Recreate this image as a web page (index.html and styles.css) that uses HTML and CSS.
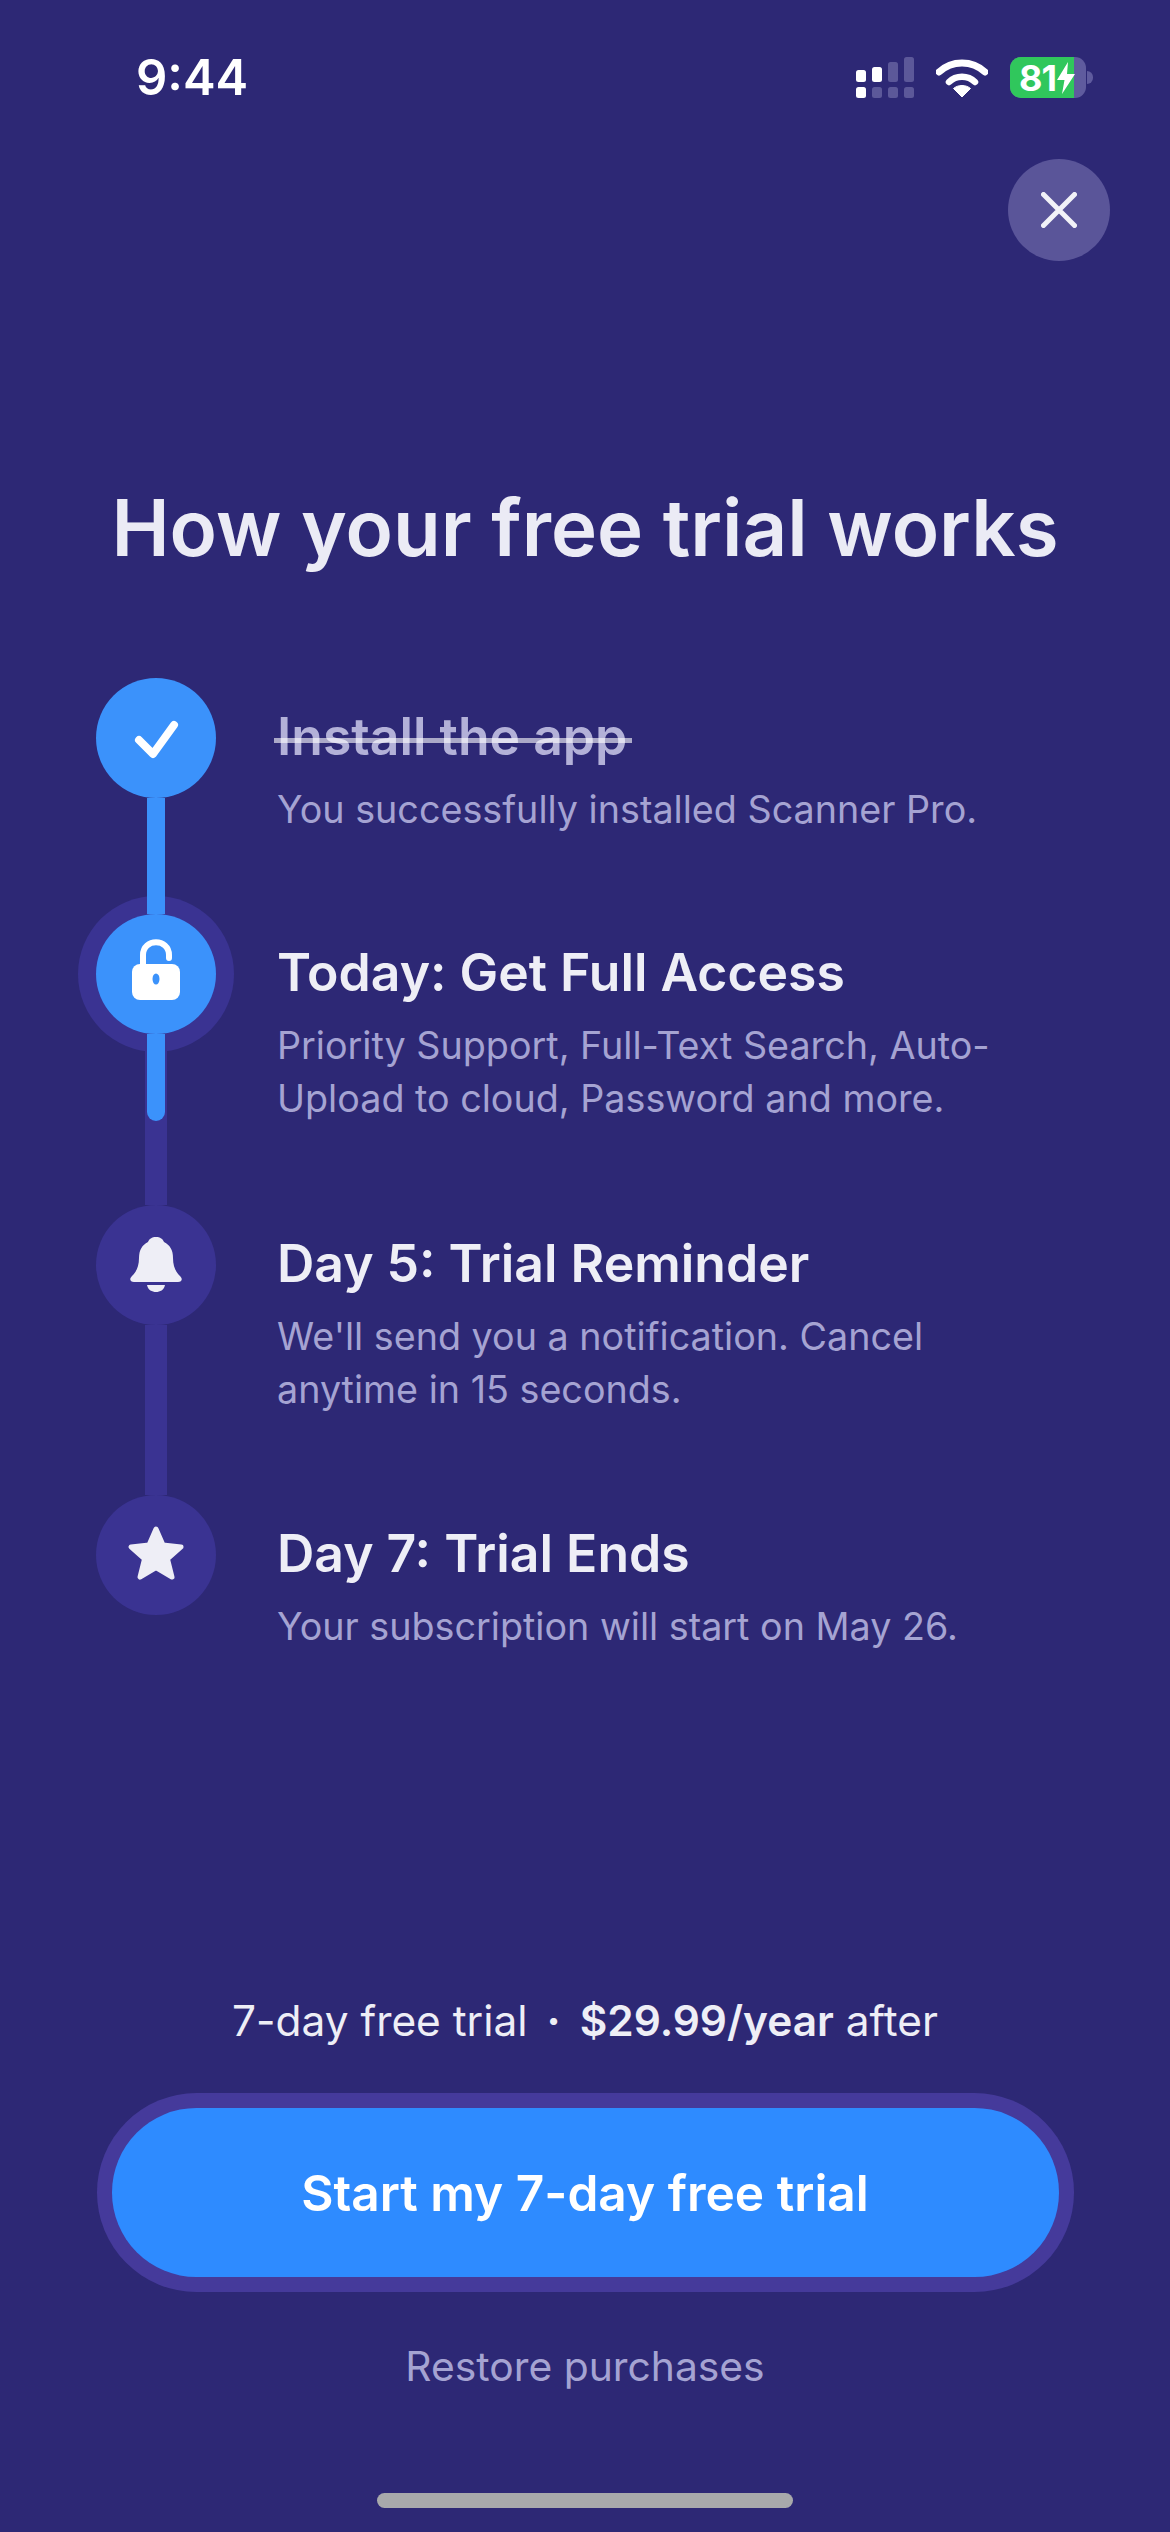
FILE: index.html
```html
<!DOCTYPE html>
<html lang="en">
<head>
  <meta charset="UTF-8">
  <meta name="viewport" content="width=device-width, initial-scale=1.0">
  <title>How your free trial works</title>
  <link rel="stylesheet" href="styles.css">
</head>
<body>
  <main class="paywall">
    <header class="status-bar">
      <span class="status-time">9:44</span>
      <div class="status-icons">
        <svg class="status-signal" viewBox="0 0 58 41" width="58" height="41">
          <rect x="0" y="13" width="10" height="12" rx="2.5" fill="#fff"/>
          <rect x="16" y="10" width="10" height="15" rx="2.5" fill="#fff"/>
          <rect x="32" y="5" width="10" height="20" rx="2.5" fill="#5c5899"/>
          <rect x="48" y="0" width="10" height="25" rx="2.5" fill="#5c5899"/>
          <rect x="0" y="30" width="10" height="11" rx="2.5" fill="#fff"/>
          <rect x="16" y="30" width="10" height="11" rx="2.5" fill="#5c5899"/>
          <rect x="32" y="30" width="10" height="11" rx="2.5" fill="#5c5899"/>
          <rect x="48" y="30" width="10" height="11" rx="2.5" fill="#5c5899"/>
        </svg>
        <svg class="status-wifi" viewBox="0 0 52 38" width="52" height="38">
          <path d="M3 13 C16 1 36 1 49 13" fill="none" stroke="#fff" stroke-width="7" stroke-linecap="round"/>
          <path d="M13 23 C20 16 32 16 39 23" fill="none" stroke="#fff" stroke-width="6.5" stroke-linecap="round"/>
          <path d="M26 38 L17.5 29.5 C22 25.5 30 25.5 34.5 29.5 Z" fill="#fff" stroke="#fff" stroke-linejoin="round"/>
        </svg>
        <div class="battery">
          <div class="battery-body">
            <div class="battery-fill"></div>
            <span class="battery-level">81</span>
            <svg class="battery-bolt" viewBox="0 0 20 32" width="20" height="32">
              <path d="M12 0 L1 18 H8.5 L6 32 L19 12 H11 Z" fill="#fff"/>
            </svg>
          </div>
          <div class="battery-nub"></div>
        </div>
      </div>
    </header>

    <button class="close-btn" aria-label="Close">
      <svg viewBox="0 0 36 36" width="36" height="36">
        <path d="M2.5 2.5 L33.5 33.5 M33.5 2.5 L2.5 33.5" fill="none" stroke="#f2f2f8" stroke-width="5" stroke-linecap="round"/>
      </svg>
    </button>

    <h1 class="title">How your free trial works</h1>

    <ol class="timeline">
      <li class="step step-install">
        <div class="step-rail">
          <div class="step-icon is-active">
            <svg viewBox="0 0 120 120" width="120" height="120">
              <path d="M43 62 L57 76 L78 47" fill="none" stroke="#fff" stroke-width="8" stroke-linecap="round" stroke-linejoin="round"/>
            </svg>
          </div>
          <div class="step-line is-active"></div>
        </div>
        <div class="step-text">
          <h2 class="step-title is-done"><span class="step-strike">Install the app</span></h2>
          <p class="step-desc">You successfully installed Scanner Pro.</p>
        </div>
      </li>
      <li class="step step-today">
        <div class="step-rail">
          <div class="step-icon is-active has-ring">
            <svg viewBox="0 0 120 120" width="120" height="120">
              <path d="M47 52 V41 C47 24 73 24 73 41 V44" fill="none" stroke="#fff" stroke-width="6" stroke-linecap="round"/>
              <rect x="36" y="50" width="48" height="36" rx="8" fill="#fff"/>
              <ellipse cx="60" cy="65" rx="3.5" ry="5.5" fill="#3b92fb"/>
            </svg>
          </div>
          <div class="step-line">
            <div class="step-line-fill"></div>
          </div>
        </div>
        <div class="step-text">
          <h2 class="step-title">Today: Get Full Access</h2>
          <p class="step-desc">Priority Support, Full-Text Search, Auto-<br>Upload to cloud, Password and more.</p>
        </div>
      </li>
      <li class="step step-reminder">
        <div class="step-rail">
          <div class="step-icon">
            <svg viewBox="0 0 120 120" width="120" height="120">
              <path d="M60 32 C64 32 67 34 68 37 C74 40 77 45 77 53 C77 62 80 67 84 71 C87 74 86 77 82 77 H38 C34 77 33 74 36 71 C40 67 43 62 43 53 C43 45 46 40 52 37 C53 34 56 32 60 32 Z" fill="#eeeef6"/>
              <path d="M51 80 H69 C68 85 64 87 60 87 C56 87 52 85 51 80 Z" fill="#eeeef6"/>
            </svg>
          </div>
          <div class="step-line"></div>
        </div>
        <div class="step-text">
          <h2 class="step-title">Day 5: Trial Reminder</h2>
          <p class="step-desc">We'll send you a notification. Cancel<br>anytime in 15 seconds.</p>
        </div>
      </li>
      <li class="step step-end">
        <div class="step-rail">
          <div class="step-icon">
            <svg viewBox="0 0 120 120" width="120" height="120">
              <path d="M60 34 L67 50 L85 52 L71.5 64 L76 82 L60 72.5 L44 82 L48.5 64 L35 52 L53 50 Z" fill="#eeeef6" stroke="#eeeef6" stroke-width="5" stroke-linejoin="round"/>
            </svg>
          </div>
        </div>
        <div class="step-text">
          <h2 class="step-title">Day 7: Trial Ends</h2>
          <p class="step-desc">Your subscription will start on May 26.</p>
        </div>
      </li>
    </ol>

    <footer class="offer">
      <p class="offer-price">7-day free trial<span class="offer-dot">·</span><strong>$29.99/year</strong> after</p>
      <div class="offer-ring">
        <button class="offer-btn">Start my 7-day free trial</button>
      </div>
      <a class="offer-restore">Restore purchases</a>
      <div class="home-indicator"></div>
    </footer>
  </main>
</body>
</html>
```

FILE: styles.css
```css
:root {
  --bg-color: #2d2875;
  --blue-color: #3b92fb;
  --btn-color: #2e8bff;
  --dim-color: #3a3392;
  --ring-color: #453a9b;
  --text-color: #eeeef6;
  --muted-color: #a5a3d2;
}

html {
  box-sizing: border-box;
  font-family: Inter, "Liberation Sans", sans-serif;
}

*,
*::before,
*::after {
  box-sizing: inherit;
}

body {
  margin: 0;
  background-color: var(--bg-color);
  color: var(--text-color);
}

.paywall {
  display: flex;
  flex-direction: column;
  width: 1170px;
  height: 2532px;
  overflow: hidden;
}

/* status bar */
.status-bar {
  display: flex;
  justify-content: space-between;
  align-items: center;
  height: 41px;
  margin-top: 57px;
  padding: 0 77px 0 136px;
}

.status-time {
  font-size: 49px;
  font-weight: 600;
  color: #fff;
}

.status-icons {
  display: flex;
  align-items: center;
  gap: 22px;
}

.status-signal,
.status-wifi {
  display: block;
}

.battery {
  display: flex;
  align-items: center;
  gap: 1px;
}

.battery-body {
  position: relative;
  display: flex;
  align-items: center;
  justify-content: flex-start;
  width: 76px;
  height: 41px;
  padding-left: 9px;
  border-radius: 11px;
  background-color: #5f5b9e;
  overflow: hidden;
}

.battery-fill {
  position: absolute;
  left: 0;
  top: 0;
  bottom: 0;
  width: 64px;
  background-color: #30c75c;
}

.battery-level {
  position: relative;
  font-size: 36px;
  font-weight: 700;
  letter-spacing: -1px;
  color: #fff;
}

.battery-bolt {
  position: relative;
}

.battery-nub {
  width: 6px;
  height: 13px;
  border-radius: 0 6px 6px 0;
  background-color: #5f5b9e;
}

/* close */
.close-btn {
  display: flex;
  align-items: center;
  justify-content: center;
  align-self: flex-end;
  width: 102px;
  height: 102px;
  margin: 61px 60px 0 0;
  padding: 0;
  border: none;
  border-radius: 50%;
  background-color: #5a5599;
}

.title {
  margin: 217px 0 0;
  font-size: 78px;
  font-weight: 600;
  line-height: 100px;
  text-align: center;
  color: #ebebf5;
}

/* timeline */
.timeline {
  isolation: isolate;
  margin: 100px 0 0;
  padding: 0 0 0 96px;
  list-style: none;
}

.step {
  display: flex;
  gap: 61px;
}

.step-install {
  height: 236px;
}

.step-today {
  height: 291px;
}

.step-reminder {
  height: 290px;
}

.step-end {
  height: 120px;
}

.step-rail {
  display: flex;
  flex-direction: column;
  align-items: center;
  flex: none;
  width: 120px;
}

.step-icon {
  position: relative;
  flex: none;
  width: 120px;
  height: 120px;
  border-radius: 50%;
  background-color: var(--dim-color);
}

.step-icon svg {
  display: block;
}

.step-icon.is-active {
  background-color: var(--blue-color);
}

.step-icon.has-ring::before {
  content: "";
  position: absolute;
  top: -18px;
  left: -18px;
  right: -18px;
  bottom: -18px;
  z-index: -1;
  border-radius: 50%;
  background-color: var(--dim-color);
}

.step-line {
  flex: 1;
  width: 22px;
  background-color: var(--dim-color);
}

.step-line.is-active {
  width: 18px;
  background-color: var(--blue-color);
}

.step-line-fill {
  width: 18px;
  height: 87px;
  margin: 0 auto;
  border-radius: 0 0 9px 9px;
  background-color: var(--blue-color);
}

.step-text {
  padding-top: 28px;
}

.step-title {
  margin: 0;
  font-size: 51.7px;
  font-weight: 600;
  line-height: 60px;
}

.step-title.is-done {
  color: #b3b1d8;
}

.step-strike {
  position: relative;
  display: inline-block;
}

.step-strike::after {
  content: "";
  position: absolute;
  left: -3px;
  right: -5px;
  top: 32px;
  height: 5px;
  background-color: rgba(255, 255, 255, 0.6);
}

.step-desc {
  margin: 17px 0 0;
  font-size: 37.7px;
  line-height: 53px;
  color: var(--muted-color);
}

/* bottom offer */
.offer {
  display: flex;
  flex-direction: column;
  align-items: center;
  flex: 1;
}

.offer-price {
  margin: 380px 0 0;
  font-size: 42.4px;
  line-height: 52px;
  color: var(--text-color);
}

.offer-price strong {
  font-weight: 600;
}

.offer-dot {
  margin: 0 19px;
  font-weight: 700;
}

.offer-ring {
  margin-top: 46px;
  padding: 15px;
  border-radius: 100px;
  background-color: var(--ring-color);
}

.offer-btn {
  display: block;
  width: 947px;
  height: 169px;
  padding: 0;
  border: none;
  border-radius: 85px;
  background-color: var(--btn-color);
  color: #fff;
  font-family: inherit;
  font-size: 49.6px;
  font-weight: 600;
}

.offer-restore {
  margin-top: 48px;
  font-size: 40.8px;
  line-height: 52px;
  color: var(--muted-color);
}

.home-indicator {
  width: 416px;
  height: 15px;
  margin-top: 101px;
  border-radius: 8px;
  background-color: #a8a9ab;
}
```
